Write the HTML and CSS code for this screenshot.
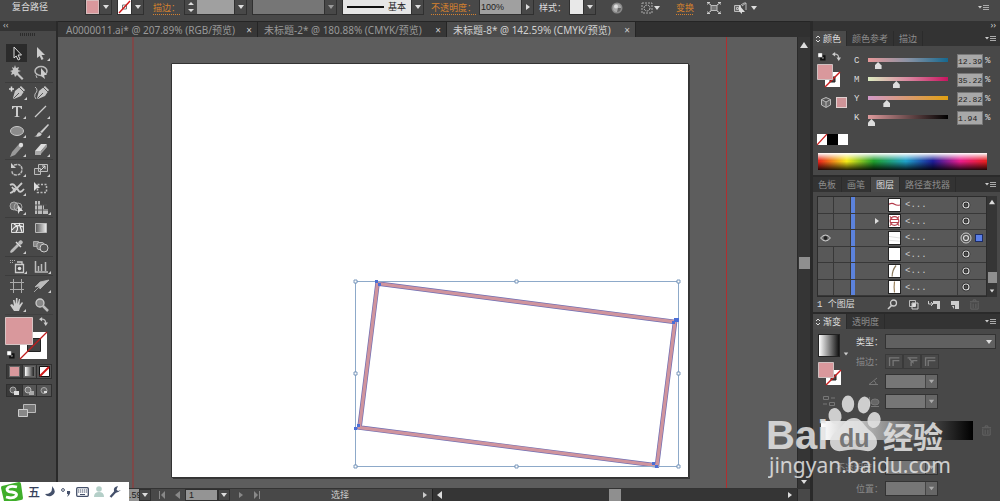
FILE: index.html
```html
<!DOCTYPE html>
<html lang="zh-CN">
<head>
<meta charset="utf-8">
<title>未标题-8</title>
<link rel="stylesheet" href="styles.css">
</head>
<body>
<svg class="defs" aria-hidden="true">
  <defs>
    <symbol id="down" viewBox="0 0 8 8"><path d="M1 2h6L4 6z" fill="currentColor"/></symbol>
    <symbol id="up" viewBox="0 0 8 8"><path d="M0 7h8L4 1z" fill="currentColor"/></symbol>
    <symbol id="right" viewBox="0 0 8 8"><path d="M2 1v6l4-3z" fill="currentColor"/></symbol>
    <symbol id="left" viewBox="0 0 8 8"><path d="M6 0v8L1 4z" fill="currentColor"/></symbol>
    <symbol id="updown" viewBox="0 0 6 8"><path d="M1 3l2-2 2 2M1 5l2 2 2-2" fill="none" stroke="currentColor"/></symbol>
    <symbol id="menu" viewBox="0 0 12 8"><path d="M0 2h4L2 4.500z" fill="#ccc"/><path d="M5 1.500h6M5 3.500h6M5 5.500h6" stroke="#aaa" stroke-width="1"/></symbol>
    <symbol id="swap" viewBox="0 0 10 10"><path d="M2.500 2.500Q7.500 2 7.500 7" fill="none" stroke="#bbb" stroke-width="1.300"/><path d="M0 2.500 3.500 0v5zM5 6h5L7.500 10z" fill="#ccc"/></symbol>
    <symbol id="reset" viewBox="0 0 10 10"><path d="M4.500 4.500h4v4h-4z" stroke="#111" stroke-width="2" fill="#777"/><path d="M1 1h5v5H1z" fill="#fff" stroke="#222" stroke-width=".5"/></symbol>
    <symbol id="paint" viewBox="0 0 24 24"><path d="M8 8h15v15H8z" fill="#fff"/><path d="M13 13h5v5h-5z" fill="#444" stroke="#222"/><path d="M8 23 23 8" stroke="#c81e1e" stroke-width="1.500"/><path d="M.500.500h15v15H.500z" fill="#d9989c" stroke="#cfc0c0"/></symbol>
    <symbol id="trash" viewBox="0 0 12 12"><path d="M1 3h10M4.500 2.500V1h3v1.500M2 4v7h8V4M4.500 5v5M7.500 5v5" fill="none" stroke="currentColor"/></symbol>
    <symbol id="ring" viewBox="0 0 12 12"><circle cx="6" cy="6" r="3" fill="#4a4a4a" stroke="#222" stroke-width="2.600"/><circle cx="6" cy="6" r="3" fill="none" stroke="#ddd" stroke-width="1.200"/></symbol>
  </defs>
</svg>
<div class="app">
  <header class="control">
    <span class="kind">复合路径</span>
    <div class="combo"><span class="chip pink"></span><button class="drop" aria-label="填色"><svg><use href="#down"/></svg></button></div>
    <div class="combo g5"><svg class="chip none" viewBox="0 0 13 14"><path d="M0 0h13v14H0z" fill="#fff"/><path d="M4.500 5h4v4h-4z" fill="none" stroke="#777"/><path d="M1 13 12 1" stroke="#d01818" stroke-width="1.400"/></svg><button class="drop" aria-label="描边颜色"><svg><use href="#down"/></svg></button></div>
    <a class="link g9" href="#">描边：</a>
    <div class="combo"><button class="step" aria-label="粗细"><svg viewBox="0 0 10 14"><path d="M2 5h6L5 2zM2 9h6l-3 3z" fill="#ddd"/></svg></button><input class="weight" aria-label="描边粗细"><button class="drop" aria-label="粗细列表"><svg><use href="#down"/></svg></button></div>
    <div class="combo g5 off"><span class="profile"></span><button class="drop" aria-label="配置文件"><svg><use href="#down"/></svg></button></div>
    <div class="combo g5"><span class="brush"><i></i>基本</span><button class="drop" aria-label="画笔"><svg><use href="#down"/></svg></button></div>
    <a class="link g7" href="#">不透明度：</a>
    <div class="combo"><input class="opacity" aria-label="不透明度" value="100%"><button class="drop" aria-label="不透明度滑块"><svg><use href="#right"/></svg></button></div>
    <span class="lbl g5">样式：</span>
    <div class="combo"><span class="chip white"></span><button class="drop" aria-label="图形样式"><svg><use href="#down"/></svg></button></div>
    <button class="ib g15" aria-label="重新着色"><svg width="12" height="12" viewBox="0 0 12 12"><circle cx="6" cy="6" r="5.500" fill="#888"/><circle cx="6" cy="6" r="4" fill="#aaa"/><path d="M6 10a4 4 0 0 0 4-4H7z" fill="#666"/><circle cx="5" cy="4.500" r="2" fill="#ddd"/></svg></button>
    <button class="ib g18" aria-label="选择类似"><svg width="20" height="12" viewBox="0 0 20 12"><rect x="1" y="1" width="10" height="10" fill="none" stroke="#aaa" stroke-dasharray="2 1"/><circle cx="6" cy="6" r="3" fill="none" stroke="#bbb" stroke-dasharray="2 1"/><path d="M13 4h6l-3 4z" fill="#ddd"/></svg></button>
    <a class="link g15" href="#">变换</a>
    <button class="ib g12" aria-label="隔离"><svg width="14" height="12" viewBox="0 0 14 12"><rect x="4" y="3.500" width="6" height="5" fill="#777" stroke="#bbb"/><path d="m1 1 3 2M13 1l-3 2M1 11l3-2M13 11l-3-2M0 3V.500h3M11 .500h3V3M0 9v2.500h3M11 11.500h3V9" fill="none" stroke="#ccc"/></svg></button>
    <button class="ib g12" aria-label="编辑"><svg width="25" height="12" viewBox="0 0 25 12"><path d="M1.500 3.500h6v6h-6zM3.500 5.500h2v2h-2z" fill="#666" stroke="#bbb"/><path d="m6 3 6 7H9v2L6 9z" fill="#ddd"/><path d="M8 3l3-2h2v7M9 4l4-3" fill="none" stroke="#bbb"/><path d="M18 4h6l-3 4z" fill="#ddd"/></svg></button>
    <button class="ib end" aria-label="面板菜单"><svg width="12" height="8"><use href="#menu"/></svg></button>
  </header>

  <div class="body">
    <aside class="tools">
      <div class="toolhead">‹‹</div>
      <div class="grip"></div>
      <div class="toolset">
        <button class="on" aria-label="选择"><svg viewBox="0 0 24 19"><path d="m9 3 7.500 8h-3.500l2 4-1.800 1-2-4L9 14z" fill="#222" stroke="#ddd"/></svg></button>
        <button aria-label="直接选择"><svg viewBox="0 0 24 19"><path d="m8 3 8 8h-3.500l2 4-2 1-1.800-4L8 14z" fill="#ccc"/><path d="M21 14v3h-3z" fill="#ccc"/></svg></button>
        <button aria-label="魔棒"><svg viewBox="0 0 24 19"><path d="m10 2 1 3 3-1-1 3 3 1-3 1 .5 1.500 5 5-1.500 1.500-5-5L10 14l-1-3-3 1 1-3-2-1 3-1-1-3 2 1z" fill="#c4c4c4"/></svg></button>
        <button aria-label="套索"><svg viewBox="0 0 24 19"><ellipse cx="12" cy="8" rx="6" ry="4.500" fill="none" stroke="#bbb" stroke-width="1.500"/><path d="M8 11q-2 1 0 4" fill="none" stroke="#bbb"/><path d="m12 5 6 7h-3l1 4-4-3z" fill="#ccc"/></svg></button>
      </div>
      <div class="toolset">
        <button aria-label="钢笔"><svg viewBox="0 0 24 19"><path d="M4 6h5M6.500 3.500v5" stroke="#ddd" stroke-width="1.500"/><path d="m16 3 4 4-4 6-7 3-1-1 2-7z" fill="#c4c4c4"/><path d="m9 15 5-5M14 4l5 5" stroke="#555"/><path d="M22 14v3h-3z" fill="#ccc"/></svg></button>
        <button aria-label="曲率"><svg viewBox="0 0 24 19"><path d="m16 3 4 4-4 6-7 3-1-1 2-7z" fill="#c4c4c4"/><path d="m9 15 5-5M14 4l5 5" stroke="#555"/><path d="M6 4q4 3 0 7-1 3 1 5" fill="none" stroke="#bbb"/></svg></button>
        <button aria-label="文字"><svg viewBox="0 0 24 19"><path d="M7 4h10v3h-1q0-2-3-2v9l2 1H9l2-1V5Q8 5 8 7H7z" fill="#ccc"/><path d="M21 14v3h-3z" fill="#ccc"/></svg></button>
        <button aria-label="直线段"><svg viewBox="0 0 24 19"><path d="M6 15 17 4" stroke="#ccc" stroke-width="1.300"/><path d="M21 14v3h-3z" fill="#ccc"/></svg></button>
        <button aria-label="椭圆"><svg viewBox="0 0 24 19"><ellipse cx="12" cy="10" rx="6.500" ry="4.500" fill="#8c8c8c" stroke="#c8c8c8"/><path d="M21 14v3h-3z" fill="#ccc"/></svg></button>
        <button aria-label="画笔"><svg viewBox="0 0 24 19"><path d="m19 3 1 1-7 8-2-1zM10 11l3 2q-2 4-8 2 3 0 3-2z" fill="#ccc"/><path d="M21 14v3h-3z" fill="#ccc"/></svg></button>
        <button aria-label="铅笔"><svg viewBox="0 0 24 19"><path d="m14 4 3 3-7 8-5 2 2-5z" fill="#999"/><circle cx="16" cy="5" r="2.200" fill="#ddd"/><path d="M21 14v3h-3z" fill="#ccc"/></svg></button>
        <button aria-label="橡皮擦"><svg viewBox="0 0 24 19"><path d="m6 11 6-7h6l-6 7z" fill="#ddd"/><path d="m6 11v3h6l6-7V4l-6 7z" fill="#999"/><path d="M6 11h6v4H6z" fill="#aaa"/><path d="M21 14v3h-3z" fill="#ccc"/></svg></button>
      </div>
      <div class="toolset">
        <button aria-label="旋转"><svg viewBox="0 0 24 19"><path d="M9 5q7-2 8 4 0 6-6 6-4 0-4-4" fill="none" stroke="#bbb" stroke-width="1.500" stroke-dasharray="3 .8"/><path d="M6 3v5h5z" fill="#ccc"/><path d="M21 14v3h-3z" fill="#ccc"/></svg></button>
        <button aria-label="比例缩放"><svg viewBox="0 0 24 19"><path d="M9.500 4.500h9v7h-9zM5.500 8.500h6v6h-6z" fill="#555" stroke="#bbb"/><path d="m12 10 4-4M13 6h3v3" stroke="#ddd" fill="none"/><path d="M21 14v3h-3z" fill="#ccc"/></svg></button>
        <button aria-label="宽度"><svg viewBox="0 0 24 19"><path d="M5 6q3-2 5 1t3 1l4-4M5 14q4-1 5-5M9 13q3-5 4-2 2 4 6-1M7 8l3 4" fill="none" stroke="#ccc" stroke-width="1.800"/><path d="M21 14v3h-3z" fill="#ccc"/></svg></button>
        <button aria-label="自由变换"><svg viewBox="0 0 24 19"><path d="M8.500 5.500h9v8h-9z" fill="none" stroke="#bbb" stroke-width="1.500" stroke-dasharray="2 1.500"/><path d="m5 3 6 6H8l-3 3z" fill="#ddd"/></svg></button>
        <button aria-label="形状生成器"><svg viewBox="0 0 24 19"><circle cx="9" cy="8" r="4" fill="#777" stroke="#aaa"/><circle cx="13" cy="9" r="4" fill="none" stroke="#aaa"/><path d="m13 7 5 6h-3l-2 3z" fill="#ddd"/><path d="M21 14v3h-3z" fill="#ccc"/></svg></button>
        <button aria-label="透视网格"><svg viewBox="0 0 24 19"><path d="M6 3h5v13H6zM11 7h4v9h-4zM15 11h4v5h-4z" fill="#bbb"/><path d="M6 7h12M6 12h13M8.500 3v13M13.500 7v9" stroke="#555"/><path d="M22 14v3h-3z" fill="#ccc"/></svg></button>
      </div>
      <div class="toolset">
        <button aria-label="网格"><svg viewBox="0 0 24 19"><path d="M6.500 5.500h12v9h-12z" fill="#666" stroke="#ddd"/><path d="M7 12q5-7 11-3M9 6q6 3 2 8M14 5l3 9" fill="none" stroke="#eee" stroke-width="1.200"/></svg></button>
        <button aria-label="渐变"><svg viewBox="0 0 24 19"><defs><linearGradient id="gt"><stop stop-color="#555"/><stop offset="1" stop-color="#eee"/></linearGradient></defs><path d="M6.500 5.500h11v9h-11z" fill="url(#gt)" stroke="#bbb"/></svg></button>
        <button aria-label="吸管"><svg viewBox="0 0 24 19"><path d="m14 4 2-1 2 2-1 2-2 1-2-2zM12 7l2 2-6 6-2 1-1-1 1-2z" fill="#bbb"/><path d="m11 5 5 5" stroke="#ddd" stroke-width="1.500"/><path d="M21 14v3h-3z" fill="#ccc"/></svg></button>
        <button aria-label="混合"><svg viewBox="0 0 24 19"><path d="M4.500 4.500h5v5h-5z" fill="#888" stroke="#aaa"/><rect x="8" y="5.500" width="7" height="7" rx="2" fill="#777" stroke="#bbb"/><circle cx="15" cy="11" r="4" fill="#555" stroke="#ccc"/></svg></button>
      </div>
      <div class="toolset short">
        <button aria-label="符号喷枪"><svg viewBox="0 0 24 19"><path d="M10.500 7.500h8v8h-8zM12 5h5v2" fill="none" stroke="#ccc" stroke-width="1.300"/><circle cx="14.500" cy="11.500" r="1.800" fill="#ddd"/><path d="M5 3.500h6M5 5.500h4" stroke="#aaa" stroke-dasharray="1 1"/><path d="M22 14v3h-3z" fill="#ccc"/></svg></button>
        <button aria-label="柱形图"><svg viewBox="0 0 24 19"><path d="M6.500 4v11H19M9.500 14V9M12.500 14V7M16.500 14V5" fill="none" stroke="#bbb" stroke-width="1.500"/><path d="M22 14v3h-3z" fill="#ccc"/></svg></button>
      </div>
      <div class="toolset last">
        <button aria-label="画板"><svg viewBox="0 0 24 19"><path d="M8.500 3v14M16.500 3v14M5 6.500h14M5 13.500h14" stroke="#aaa" fill="none"/></svg></button>
        <button aria-label="切片"><svg viewBox="0 0 24 19"><path d="m20 4-4 4-5 5-1-3-4 1 5-5 9-2zM10 11l-5 5" fill="#bbb" stroke="#bbb" stroke-width=".8"/><path d="M22 14v3h-3z" fill="#ccc"/></svg></button>
        <button aria-label="抓手"><svg viewBox="0 0 24 19"><path d="M9 16 5 10l2-1 2 2-1-6h1.500l1 4 .5-6h1.500v6l1.500-5H15l-.5 6 2.500-3 1 1-3 5-1 3z" fill="#ccc"/><path d="M21 14v3h-3z" fill="#ccc"/></svg></button>
        <button aria-label="缩放"><svg viewBox="0 0 24 19"><circle cx="11" cy="8" r="4" fill="#888" stroke="#ccc" stroke-width="1.300"/><path d="m14 11 5 5" stroke="#bbb" stroke-width="2.500"/></svg></button>
      </div>
      <svg class="fillstroke" viewBox="0 0 48 46"><path d="M15 16h27v27H15z" fill="#fff"/><path d="M22.500 22.500h13v13h-13z" fill="#444" stroke="#222"/><path d="M15 43 42 16" stroke="#c01c1c" stroke-width="1.300"/><path d="M.500 1.500h27v27H.500z" fill="#d9989c" stroke="#d8c4c4"/><use href="#swap" x="34" y="1" width="9" height="9"/><use href="#reset" x="1" y="34" width="9" height="9"/></svg>
      <div class="trio">
        <button aria-label="颜色"><i class="c-pink"></i></button><button aria-label="渐变填充"><i class="c-grad"></i></button><button aria-label="无"><svg width="11" height="11" viewBox="0 0 11 11"><path d="M.500.500h10v10H.500z" fill="#fff" stroke="#111"/><path d="m1 10 9-9" stroke="#d01818" stroke-width="2"/></svg></button>
      </div>
      <div class="trio modes">
        <button aria-label="正常绘图"><svg width="11" height="10" viewBox="0 0 11 10"><circle cx="4" cy="4" r="3" fill="#666" stroke="#aaa"/><path d="M5 5h5v4H5z" fill="#ddd"/></svg></button><button aria-label="背面绘图"><svg width="11" height="10" viewBox="0 0 11 10"><path d="M5 5h5v4H5z" fill="#aaa"/><circle cx="4" cy="4" r="3" fill="#777" stroke="#bbb"/></svg></button><button aria-label="内部绘图"><svg width="11" height="10" viewBox="0 0 11 10"><circle cx="5" cy="4.500" r="3" fill="#666" stroke="#aaa"/><path d="M5 5h3v2H5z" fill="#ddd"/></svg></button>
      </div>
      <button class="screen" aria-label="屏幕模式"><svg width="18" height="14" viewBox="0 0 18 14"><path d="M5.500 1.500h12v8h-12z" fill="#777" stroke="#bbb"/><path d="M.500 6.500h9v7h-9z" fill="#888" stroke="#ccc"/></svg></button>
    </aside>

    <main class="doc">
      <nav class="tabs">
        <div class="tab"><span>A0000011.ai* @ 207.89% (RGB/预览)</span><button aria-label="关闭">×</button></div>
        <div class="tab"><span>未标题-2* @ 180.88% (CMYK/预览)</span><button aria-label="关闭">×</button></div>
        <div class="tab cur"><span>未标题-8* @ 142.59% (CMYK/预览)</span><button aria-label="关闭">×</button></div>
      </nav>
      <div class="stage">
        <div class="canvas">
          <svg class="art" width="739" height="451" viewBox="0 0 739 451">
            <path d="M74 0h2v451h-2z" fill="#7d4848"/>
            <path d="M668 0h1v451h-1z" fill="#b02e30"/>
            <path d="M115 28h517v414H115z" fill="#383838"/>
            <path d="M113.500 26.500h517v414h-517z" fill="#fff" stroke="#333"/>
            <path d="M319.500 246.500 617 285l-18 143.500L301.500 390.500z" fill="none" stroke="#6f6fb4" stroke-width="4.600"/>
            <path d="M319.500 246.500 617 285l-18 143.500L301.500 390.500z" fill="none" stroke="#d0949d" stroke-width="3.200"/>
            <path d="M297.500 244.500h323v185h-323z" fill="none" stroke="#8da9c9"/>
            <g fill="#fff" stroke="#6d8fb5" stroke-width=".9"><path d="M296 243h3v3h-3zM457 243h3v3h-3zM619 243h3v3h-3zM296 335h3v3h-3zM619 335h3v3h-3zM296 428h3v3h-3zM457 428h3v3h-3zM619 428h3v3h-3z"/></g>
            <path d="M317 243h3v3h-3zM320 246h3v3h-3zM616 281h5v4h-5zM614 284h3v3h-3zM296 390h3v3h-3zM299 387h3v3h-3zM597 428h3v3h-3zM594 425h3v3h-3z" fill="#4a6ed6"/>
          </svg>
        </div>
        <div class="vbar"><svg width="8" height="8"><use href="#up"/></svg><i></i><svg width="8" height="8"><use href="#down"/></svg></div>
      </div>
      <footer class="status">
        <input class="zoomv" aria-label="缩放" value="142.59"><button class="drop" aria-label="缩放列表"><svg><use href="#down"/></svg></button>
        <button class="nav" aria-label="首项"><svg width="8" height="8" viewBox="0 0 8 8"><path d="M1.500 0v8" stroke="#888"/><path d="M7 0v8L3 4z" fill="#888"/></svg></button>
        <button class="nav" aria-label="上一项"><svg width="8" height="8"><use href="#left"/></svg></button>
        <input class="page" aria-label="画板" value="1"><button class="drop" aria-label="画板列表"><svg><use href="#down"/></svg></button>
        <button class="nav" aria-label="下一项"><svg width="8" height="8"><use href="#right"/></svg></button>
        <button class="nav" aria-label="末项"><svg width="8" height="8" viewBox="0 0 8 8"><path d="M1 0v8l4-4z" fill="#888"/><path d="M6.500 0v8" stroke="#888"/></svg></button>
        <span class="mode">选择</span>
        <svg class="go" width="8" height="8"><use href="#right"/></svg>
        <div class="hbar"><svg width="8" height="8"><use href="#left"/></svg><i></i><svg width="8" height="8"><use href="#right"/></svg></div>
        <span class="corner"></span>
      </footer>
    </main>

    <aside class="dock">
      <div class="dockhead">››</div>
      <section class="panel color">
        <div class="ptabs"><button class="cur"><svg width="6" height="8"><use href="#updown"/></svg>颜色</button><button>颜色参考</button><button>描边</button><svg width="12" height="8"><use href="#menu"/></svg></div>
        <div class="cbody">
          <div class="cleft">
            <div class="mini"><svg width="9" height="9"><use href="#reset"/></svg><svg width="9" height="9"><use href="#swap"/></svg></div>
            <svg width="24" height="24"><use href="#paint"/></svg>
            <div class="mini cube"><svg width="10" height="11" viewBox="0 0 10 11"><path d="m5 .500 4.500 2v5.500L5 10.500.500 8V2.500zM.500 2.500 5 5l4.500-2.500M5 5v5" fill="#666" stroke="#bbb"/></svg><i></i></div>
          </div>
          <div class="sliders">
            <label for="c">C</label><input id="c" class="rc" type="range" value="9"><input aria-label="C 值" value="12.39"><span>%</span>
            <label for="m">M</label><input id="m" class="rm" type="range" value="34"><input aria-label="M 值" value="35.22"><span>%</span>
            <label for="y">Y</label><input id="y" class="ry" type="range" value="21"><input aria-label="Y 值" value="22.82"><span>%</span>
            <label for="k">K</label><input id="k" class="rk" type="range" value="0"><input aria-label="K 值" value="1.94"><span>%</span>
          </div>
        </div>
        <svg class="bw" width="31" height="11" viewBox="0 0 31 11"><path d="M0 0h31v11H0z" fill="#fff"/><path d="M10 0h11v11H10z"/><path d="M0 11 10 0" stroke="#c22" stroke-width="1.200"/></svg>
        <div class="spectrum"></div>
      </section>

      <section class="panel layers">
        <div class="ptabs"><button>色板</button><button>画笔</button><button class="cur">图层</button><button>路径查找器</button><svg width="12" height="8"><use href="#menu"/></svg></div>
        <div class="listwrap">
          <div class="list">
            <div class="row"><span></span><span></span><b></b><span></span><svg class="th" viewBox="0 0 14 14"><path d="M0 6q4-2 7 0t7 1" fill="none" stroke="#b33a4a" stroke-width="1.400"/></svg><em>&lt;...</em><svg class="tg"><use href="#ring"/></svg><span></span></div>
            <div class="row"><span></span><span></span><b></b><svg class="tri"><use href="#right"/></svg><svg class="th" viewBox="0 0 14 14"><circle cx="7" cy="7" r="5.500" fill="none" stroke="#b8404c" stroke-width="1.500"/><path d="M1 1l3 3M13 1l-3 3M1 13l3-3M13 13l-3-3M2 5h10M2 9h10" stroke="#b8404c" stroke-width="1.300"/></svg><em>&lt;...</em><svg class="tg"><use href="#ring"/></svg><span></span></div>
            <div class="row"><svg class="eye" viewBox="0 0 12 10"><path d="M1 5q5-6 10 0-5 6-10 0z" fill="#777" stroke="#ccc"/><circle cx="6" cy="5" r="2" fill="#222"/></svg><span></span><b></b><span></span><svg class="th" viewBox="0 0 14 14"><path d="m0 5 14 2M0 10l14 1" stroke="#ddd"/></svg><em>&lt;...</em><svg class="tg" viewBox="0 0 12 12"><circle cx="6" cy="6" r="5" fill="#555" stroke="#ccc"/><circle cx="6" cy="6" r="2.500" fill="none" stroke="#ddd" stroke-width="1.200"/></svg><i class="sel"></i></div>
            <div class="row"><span></span><span></span><b></b><span></span><svg class="th" viewBox="0 0 14 14"></svg><em>&lt;...</em><svg class="tg"><use href="#ring"/></svg><span></span></div>
            <div class="row"><span></span><span></span><b></b><span></span><svg class="th" viewBox="0 0 14 14"><path d="M4 14q0-8 5-14" fill="none" stroke="#8a7a5c" stroke-width="1.500"/></svg><em>&lt;...</em><svg class="tg"><use href="#ring"/></svg><span></span></div>
            <div class="row"><span></span><span></span><b></b><span></span><svg class="th" viewBox="0 0 14 14"><path d="M7 0q-1 7 0 14" fill="none" stroke="#9a805a" stroke-width="1.500"/></svg><em>&lt;...</em><svg class="tg"><use href="#ring"/></svg><span></span></div>
          </div>
          <div class="lbar"><svg width="6" height="6"><use href="#up"/></svg><i></i><svg width="6" height="6"><use href="#down"/></svg></div>
        </div>
        <div class="lfoot"><span>1 个图层</span>
          <button aria-label="定位"><svg width="11" height="11" viewBox="0 0 11 11"><circle cx="6.500" cy="4" r="3" fill="none" stroke="#ccc" stroke-width="1.300"/><path d="M4.500 6.500 1 10" stroke="#ccc" stroke-width="1.600"/></svg></button>
          <button aria-label="蒙版"><svg width="11" height="11" viewBox="0 0 11 11"><path d="M1.500 1.500h6v6h-6z" fill="none" stroke="#bbb"/><path d="M4 4h6v6H4z" fill="none" stroke="#ccc"/><circle cx="6" cy="6" r="2" fill="#ddd"/></svg></button>
          <button aria-label="子图层"><svg width="12" height="10" viewBox="0 0 12 10"><path d="M.500 1v3h4M3 2l2 2-2 2" fill="none" stroke="#ccc"/><path d="M5 1h7v8H9V4H5z" fill="#ccc"/></svg></button>
          <button aria-label="新建图层"><svg width="10" height="10" viewBox="0 0 10 10"><path d="M1 1h8v8H5V5H1z" fill="#ccc"/><path d="M2 6h2v3z" fill="#ccc"/></svg></button>
          <button class="dim" aria-label="删除"><svg width="11" height="11"><use href="#trash"/></svg></button>
        </div>
      </section>

      <section class="panel gradient">
        <div class="ptabs"><button class="cur"><svg width="6" height="8"><use href="#updown"/></svg>渐变</button><button>透明度</button><svg width="12" height="8"><use href="#menu"/></svg></div>
        <div class="gbody">
          <div class="gleft">
            <div class="gsw"><i></i><svg width="6" height="6"><use href="#down"/></svg></div>
            <svg width="24" height="24"><use href="#paint"/></svg>
            <svg class="rev" width="12" height="10" viewBox="0 0 12 10"><path d="M.500.500h5v3h-5zM6.500 6.500h5v3h-5zM8 2h4M0 8h4" fill="none" stroke="#777"/></svg>
          </div>
          <div class="gform">
            <label for="type">类型：</label><div class="sel2"><select id="type"><option></option></select><svg><use href="#down"/></svg></div>
            <span class="dim">描边：</span><div class="caps"><button aria-label="描边内"><svg viewBox="0 0 18 14"><path d="M4 12V3h11M8 12V6h7" fill="none" stroke="#777" stroke-width="1.500"/></svg></button><button aria-label="沿描边"><svg viewBox="0 0 18 14"><path d="M4 3h11M6 4l4 4V6h5M8 12V7" fill="none" stroke="#777" stroke-width="1.500"/></svg></button><button aria-label="跨描边"><svg viewBox="0 0 18 14"><path d="M4 12V3h11M7 12V6h8" fill="none" stroke="#777" stroke-width="1.500"/></svg></button></div>
            <label class="dim ico" for="ang"><svg width="10" height="9" viewBox="0 0 10 9"><path d="M9 1 1 7.500h9M6 4q2 1 2 3" fill="none" stroke="#777"/></svg></label><div class="num"><input id="ang" disabled><svg><use href="#down"/></svg></div>
            <label class="dim ico" for="asp"><svg width="12" height="10" viewBox="0 0 12 10"><ellipse cx="7" cy="5" rx="4" ry="3" fill="#666" stroke="#777"/><path d="M1.500 0v9M3 9.500h8" stroke="#777"/></svg></label><div class="num"><input id="asp" disabled><svg><use href="#down"/></svg></div>
          </div>
        </div>
        <div class="ramp"><i></i><svg width="11" height="11"><use href="#trash"/></svg></div>
        <div class="gform low">
          <label class="dim" for="op">不透明度：</label><div class="num"><input id="op" disabled><svg><use href="#down"/></svg></div>
          <label class="dim" for="pos">位置：</label><div class="num"><input id="pos" disabled><svg><use href="#down"/></svg></div>
        </div>
      </section>
    </aside>
  </div>

  <svg class="mark" width="186" height="86" viewBox="0 0 186 86">
    <g fill="#e4e4e4" opacity=".86">
      <text class="m-logo" x="-2" y="55">Bai</text>
      <ellipse cx="67" cy="22" rx="6.500" ry="8" transform="rotate(-12 67 22)"/><ellipse cx="80" cy="10" rx="6.200" ry="8.500"/><ellipse cx="96" cy="11" rx="6.200" ry="8.500" transform="rotate(10 96 11)"/><ellipse cx="106" cy="26" rx="6.500" ry="8" transform="rotate(15 106 26)"/>
      <path d="M86 24c7 0 9 6 14 11 5 4 9 8 9 13 0 6-5 10-11 9-8-2-16-2-24 0-7 1-12-3-12-9s5-9 10-14c4-4 7-10 14-10z"/>
      <text class="m-cn" x="115" y="54">经验</text>
      <text class="m-url" x="1" y="79">jingyan.baidu.com</text>
    </g>
    <text class="m-du" x="71" y="53">du</text>
  </svg>

  <div class="ime">
    <svg width="22" height="22" viewBox="0 0 22 22"><path d="m1 5 17-4q2 0 2 2l2 14q0 2-2 2L5 22q-2 0-2-2L0 7q0-2 1-2z" fill="#3fae2a"/><path d="M16 6Q8 4 6 8q0 3 5 3 6 1 4 4-3 3-10 1" fill="none" stroke="#fff" stroke-width="2.800"/></svg>
    <span>五</span>
    <svg width="11" height="11" viewBox="0 0 11 11"><path d="M7 0q6 7-1 10-4 1-6-2 8 0 7-8z" fill="#44506a"/></svg>
    <svg width="10" height="10" viewBox="0 0 10 10"><circle cx="2" cy="3" r="1.400" fill="none" stroke="#44506a"/><path d="M6 4h3q1 3-3 6 1-2 1-3H6z" fill="#44506a"/></svg>
    <svg width="13" height="10" viewBox="0 0 13 10"><rect x=".7" y=".7" width="11.600" height="8.600" rx="1" fill="#fff" stroke="#44506a" stroke-width="1.300"/><path d="M2 3h9M2 5h9" stroke="#44506a" stroke-dasharray="1.300 .7"/><path d="M4 7.500h5" stroke="#44506a"/></svg>
    <svg width="10" height="12" viewBox="0 0 10 12"><circle cx="5" cy="3" r="2.800" fill="#b4cfc8"/><path d="M0 11q0-5 5-5t5 5z" fill="#b4cfc8"/></svg>
    <svg width="12" height="12" viewBox="0 0 12 12"><path d="M1.500 11 6.500 5.500" stroke="#44506a" stroke-width="2.300"/><path d="M9 0Q4 1 5 5t7-1L9 5 7.500 3.500z" fill="#44506a"/></svg>
  </div>
</div>
</body>
</html>
```
FILE: styles.css
```css
* { box-sizing: border-box; }
body { margin: 0; background: #484848; color: #ccc; font: 9px/12px "Noto Sans", "Noto Sans CJK SC", sans-serif; }
button, input, select { font: inherit; color: inherit; margin: 0; padding: 0; border: 0; background: none; border-radius: 0; min-width: 0; }
button { display: flex; align-items: center; justify-content: center; }
svg { display: block; flex: none; }
i, em { font-style: normal; display: block; }
.defs { position: absolute; width: 0; height: 0; }
.app { position: relative; display: flex; flex-direction: column; height: 100vh; overflow: hidden; }

/* control bar */
.control { display: flex; align-items: flex-start; height: 21px; background: #484848; padding: 0 10px 0 12px; flex: none; white-space: nowrap; }
.control > * { flex: none; }
.kind { width: 73px; padding-top: 1px; color: #ddd; }
.combo { display: flex; height: 15px; border: 1px solid #303030; border-top: 0; background: #484848; }
.combo .drop { width: 12px; border-left: 1px solid #303030; }
.drop svg { width: 8px; height: 8px; color: #ddd; }
.chip { width: 13px; height: 14px; }
.pink { background: #d9989c; border: 1px solid #d8bcbc; }
.white { background: #e8e8e8; }
.link, .lbl { padding-top: 2px; color: #d5812f; }
.link { text-decoration: underline dotted; text-underline-offset: 3px; }
.lbl { color: #ddd; width: 30px; }
.g5 { margin-left: 5px; } .g7 { margin-left: 7px; } .g9 { margin-left: 9px; } .g12 { margin-left: 12px; } .g15 { margin-left: 15px; } .g18 { margin-left: 18px; }
.link.g9 { width: 31px; }
.link.g7 { width: 48px; }
.link.g15 { width: 19px; }
.step { width: 12px; }
.step svg { width: 10px; height: 14px; }
.weight { width: 37px; background: #a0a0a0; }
.profile { width: 71px; background: #767676; }
.off .drop svg { color: #999; }
.brush { display: flex; align-items: center; gap: 4px; width: 68px; padding-left: 4px; background: #e6e6e6; color: #222; }
.brush i { width: 37px; height: 2px; background: #111; }
.opacity { width: 41px; padding-left: 1px; background: #a0a0a0; color: #222; font-family: "Liberation Sans", sans-serif; }
.ib { height: 16px; }
.end { margin-left: auto; }

.body { display: flex; flex: 1; min-height: 0; }

/* tools */
.tools { width: 58px; flex: none; border-right: 2px solid #2a2a2a; background: #484848; }
.toolhead { height: 10px; background: #333; color: #bbb; line-height: 7px; padding-left: 3px; }
.grip { width: 16px; height: 3px; margin: 2px 0 8px 20px; background: repeating-linear-gradient(90deg, #2c2c2c 0 1px, #484848 1px 2px); }
.toolset { display: grid; grid-template-columns: 24px 24px; grid-auto-rows: 19px; margin: 0 3px 0 5px; border-bottom: 1px solid #3c3c3c; }
.toolset svg { width: 24px; height: 19px; }
.on { background: #2b2b2b; margin: 0 2px 1px 1px; }
.short { height: 19px; }
.last { border-color: #404040; }
.fillstroke { width: 48px; height: 46px; margin: 1px 0 2px 5px; }
.trio { display: grid; grid-template-columns: repeat(3, 1fr); height: 15px; margin: 0 4px 5px 6px; border: 1px solid #303030; background: #3a3a3a; }
.trio button + button { border-left: 1px solid #303030; background: #555; }
.trio i { width: 11px; height: 11px; border: 1px solid #111; outline: 1px solid #666; outline-offset: -1px; }
.c-pink { background: #d9989c; }
.c-grad { background: linear-gradient(90deg, #fff, #222); }
.modes { height: 13px; margin-bottom: 6px; }
.screen { margin-left: 18px; }

/* document */
.doc { flex: 1; min-width: 0; display: flex; flex-direction: column; }
.tabs { display: flex; height: 16px; background: #303030; border-top: 1px solid #252525; flex: none; }
.tab { display: flex; align-items: center; justify-content: space-between; width: 189px; padding: 0 4px 0 6px; border-right: 1px solid #252525; background: #373737; color: #999; font-size: 10px; white-space: nowrap; }
.tab:first-child { width: 200px; padding-left: 8px; }
.tab button { width: 8px; color: #ccc; }
.cur.tab { background: #4c4c4c; color: #d0d0d0; }
.stage { display: flex; flex: 1; min-height: 0; }
.canvas { position: relative; flex: 1; overflow: hidden; background: #5d5d5d; }
.art { position: absolute; left: 0; top: 0; }
.vbar { width: 13px; flex: none; display: flex; flex-direction: column; align-items: center; padding: 4px 0 2px; background: #353535; color: #ddd; border-left: 1px solid #2a2a2a; }
.vbar i { width: 11px; height: 12px; margin: 208px 0 auto; background: #8f8f8f; }
.status { display: flex; height: 13px; flex: none; background: #484848; border-top: 1px solid #333; padding-left: 56px; }
.status input { background: #949494; color: #222; font-family: "Liberation Sans", sans-serif; }
.zoomv { width: 25px; text-align: right; }
.status .drop { width: 12px; border: 1px solid #303030; }
.nav { width: 12px; margin-left: 4px; color: #888; }
.nav svg { width: 8px; height: 8px; }
.drop + .nav { margin-left: 5px; }
.nav + .page { margin-left: 1px; }
.page { width: 33px; padding-left: 3px; border: 1px solid #303030; }
.mode { margin-left: 68px; }
.go { margin: 2px 3px 0 auto; color: #ccc; }
.hbar { display: flex; align-items: center; width: 365px; padding: 0 3px; background: #353535; border-left: 1px solid #222; color: #ddd; }
.hbar i { width: 12px; height: 12px; margin: 0 auto 0 165px; background: #8f8f8f; }
.corner { width: 13px; background: #484848; border-left: 1px solid #2a2a2a; }

/* dock */
.dock { width: 190px; flex: none; border-left: 3px solid #2a2a2a; background: #484848; }
.dockhead { height: 10px; background: #333; color: #ccc; text-align: right; line-height: 7px; padding-right: 4px; }
.panel { border-bottom: 2px solid #2a2a2a; }
.ptabs { display: flex; align-items: center; height: 15px; background: #333; }
.ptabs button { height: 15px; padding: 0 5px; color: #8d8d8d; border-right: 1px solid #2b2b2b; white-space: nowrap; }
.ptabs .cur { background: #4a4a4a; color: #ddd; padding-left: 2px; gap: 2px; }
.layers .ptabs .cur { padding-left: 5px; }
.ptabs > svg { margin: 0 3px 0 auto; }

.color { height: 146px; }
.cbody { display: flex; padding: 4px 7px 0 4px; height: 84px; }
.cleft { width: 35px; }
.mini { display: flex; gap: 6px; height: 13px; align-items: center; }
.cleft > svg { margin-top: 1px; }
.cube { margin: 8px 0 0 4px; gap: 5px; }
.cube i { width: 11px; height: 11px; background: #cf9498; border: 1px solid #e0d0d0; }
.sliders { flex: 1; display: grid; grid-template-columns: 14px 1fr 26px 8px; grid-auto-rows: 14px; row-gap: 5px; padding-top: 4px; column-gap: 2px; align-items: center; font-family: "Liberation Mono", monospace; color: #ddd; }
.sliders label { padding-left: 2px; }
.sliders input { width: 100%; height: 14px; }
.sliders input:not([type=range]) { background: #a8a8a8; color: #222; border: 1px solid #777; font-size: 8px; }
.sliders input[type=range] { appearance: none; width: 80px; }
.sliders input::-webkit-slider-runnable-track { height: 4px; margin-bottom: 2px; }
.sliders input::-webkit-slider-thumb { appearance: none; width: 7px; height: 7px; margin-top: 4px; background: #ddd; clip-path: polygon(50% 0, 100% 50%, 100% 100%, 0 100%, 0 50%); }
.sliders .rc::-webkit-slider-runnable-track { background: linear-gradient(90deg, #e8999a, #8a93a5, #15688f); }
.sliders .rm::-webkit-slider-runnable-track { background: linear-gradient(90deg, #dcebc0, #d988a0, #c8145f); }
.sliders .ry::-webkit-slider-runnable-track { background: linear-gradient(90deg, #d29ac8, #d99a70, #e0a010); }
.sliders .rk::-webkit-slider-runnable-track { background: linear-gradient(90deg, #dd9a9c, #6b4b4c, #000); }
.bw { margin: 4px 0 8px 4px; }
.spectrum { height: 17px; margin: 0 13px 0 5px; background: linear-gradient(180deg, #fff 0%, rgba(255,255,255,0) 45%, rgba(0,0,0,0) 50%, rgba(0,0,0,.85) 100%), linear-gradient(90deg, #e8201c, #f4ea18 17%, #1f9d2c 33%, #1fa0c8 52%, #1c1c96 68%, #e81c8c 84%, #e8201c); }

.layers { height: 137px; }
.listwrap { display: flex; height: 101px; margin: 4px 3px 0 4px; }
.list { flex: 1; display: grid; grid-template-rows: repeat(6, 1fr); border: 1px solid #2c2c2c; background: #585858; overflow: hidden; }
.row { display: grid; grid-template-columns: 16px 17px 4px 31px 16px 1fr 16px 12px; align-items: center; border-bottom: 1px solid #383838; min-height: 0; }
.row > :nth-child(1), .row > :nth-child(2) { border-right: 1px solid #383838; align-self: stretch; height: 100%; }
.row b { height: 100%; background: #5b82dc; }
.tri { width: 8px; height: 8px; color: #ddd; justify-self: end; margin-right: 5px; }
.th { width: 13px; height: 14px; background: #fff; border: 1px solid #222; justify-self: center; }
.row em { height: 100%; padding: 2px 0 0 3px; border-right: 1px solid #383838; font-family: "Liberation Mono", monospace; }
.tg { width: 12px; height: 12px; justify-self: center; }
.row > .eye { width: 15px; height: 10px; align-self: center; border: 0; }
.sel { width: 6px; height: 6px; margin-left: 2px; background: #5b7fe8; outline: 1px solid #1c2c66; }
.lbar { width: 10px; display: flex; flex-direction: column; align-items: center; justify-content: flex-end; gap: 5px; padding: 3px 0; background: #353535; color: #ddd; }
.lbar svg:first-child { margin-bottom: auto; }
.lbar i { width: 9px; height: 11px; background: #8f8f8f; }
.lfoot { display: flex; align-items: center; height: 15px; padding: 0 20px 0 4px; justify-content: space-between; }
.lfoot span { width: 61px; color: #ddd; font-family: "Liberation Mono", "Noto Sans CJK SC", monospace; }
.dim { color: #8a8a8a; }
.lfoot .dim { color: #666; }

.gradient { border: 0; }
.gbody { display: flex; padding: 5px 4px 0 5px; }
.gleft { width: 34px; }
.gsw { display: flex; align-items: flex-end; gap: 3px; height: 23px; margin-bottom: 5px; }
.gsw i { width: 22px; height: 23px; background: linear-gradient(90deg, #fff, #111); border: 1px solid #222; }
.rev { margin: 10px 0 0 5px; }
.gform { flex: 1; display: grid; grid-template-columns: 33px 1fr; grid-auto-rows: 15px; row-gap: 5px; align-items: center; white-space: nowrap; }
.gform > label { padding-left: 4px; color: #ddd; }
.gform > .dim { padding-left: 4px; color: #8a8a8a; }
.gform > .ico { padding-left: 16px; }
.sel2, .num { position: relative; display: flex; height: 15px; border: 1px solid #333; background: #606060; }
.sel2 select { width: 100%; appearance: none; }
.sel2 svg { position: absolute; right: 2px; top: 3px; width: 8px; height: 8px; color: #ddd; }
.num { width: 53px; background: #767676; }
.num input { flex: 1; width: 0; }
.num svg { width: 12px; height: 13px; padding: 3px 2px; border-left: 1px solid #444; background: #666; color: #aaa; }
.caps { display: flex; }
.caps button { width: 18px; height: 15px; border: 1px solid #3a3a3a; }
.caps svg { width: 16px; height: 13px; }
.ramp { display: flex; align-items: center; justify-content: space-between; margin: 12px 8px 20px 8px; color: #666; }
.ramp i { width: 152px; height: 19px; background: linear-gradient(90deg, #fff, #000); }
.low { padding-left: 39px; row-gap: 6px; }
.low > .dim:first-child { padding-left: 0; margin-left: -16px; }

/* overlays */
.mark { position: absolute; right: 46px; bottom: 21px; }
.m-logo { font: bold 40px "Liberation Sans", sans-serif; }
.m-cn { font: bold 30px "Noto Sans CJK SC", sans-serif; }
.m-url { font: 21px "Noto Sans", sans-serif; }
.m-du { font: bold 25px "Liberation Sans", sans-serif; fill: #777; }
.ime { position: absolute; left: 0; bottom: 0; width: 129px; height: 19px; display: flex; align-items: center; gap: 5px; padding: 0 4px 0 1px; background: #fff; color: #35405a; }
.ime span { font: 500 12px/18px "Noto Sans CJK SC", sans-serif; }
```
